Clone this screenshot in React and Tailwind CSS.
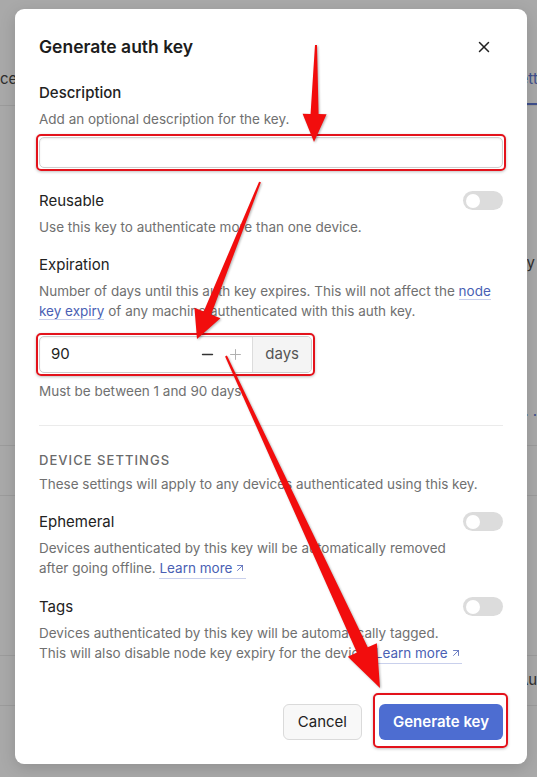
import { X, ArrowUpRight, Minus, Plus } from 'lucide-react'

const font = { fontFamily: 'Inter, "Noto Sans", sans-serif' }

function arrowPoints(tail, tip, tailW, neckW, headLen, headW) {
    const dx = tip[0] - tail[0]
    const dy = tip[1] - tail[1]
    const len = Math.hypot(dx, dy)
    const ux = dx / len
    const uy = dy / len
    const nx = -uy
    const ny = ux
    const bx = tip[0] - ux * headLen
    const by = tip[1] - uy * headLen
    const p = (x, y, w, s) => `${x + nx * w * s / 2},${y + ny * w * s / 2}`
    return [
        p(tail[0], tail[1], tailW, 1),
        p(bx, by, neckW, 1),
        p(bx, by, headW, 1),
        `${tip[0]},${tip[1]}`,
        p(bx, by, headW, -1),
        p(bx, by, neckW, -1),
        p(tail[0], tail[1], tailW, -1),
    ].join(' ')
}

function Toggle() {
    return (
        <div className="w-[40px] h-[19px] rounded-full bg-[#dcdcdc] flex items-center px-[3px] shrink-0">
            <div className="w-[14px] h-[14px] rounded-full bg-white" />
        </div>
    )
}

function LearnMore() {
    return (
        <a className="inline-flex items-center gap-[2px] text-[#4a5fb4] border-b border-[#c9d0ec]">
            Learn more <ArrowUpRight className="w-[12px] h-[12px]" strokeWidth={1.6} />
        </a>
    )
}

function Annotation() {
    return <div className="absolute -inset-[3px] rounded-[5px] border-2 border-[#e3121b] shadow-[0_1px_3px_rgba(0,0,0,0.25)] pointer-events-none" />
}

export default function App() {
    return (
        <div className="relative w-[537px] h-[777px] overflow-hidden bg-[#a9a9a9]" style={font}>
            {/* background page, dimmed */}
            <div className="flex flex-col text-[15px] text-[#2e2e2e]">
                <div className="h-[66px]" />
                <div className="flex h-[40px] border-b border-[#9c9c9c] whitespace-nowrap">
                    <div className="w-[510px] shrink-0 pt-[2px]">ces</div>
                    <div className="shrink-0 pt-[2px] text-[#3f4f8c] border-b-2 border-[#3f4f8c]">Settings</div>
                </div>
                <div className="h-[146px]" />
                <div className="flex justify-end pr-[2px] h-[22px]">Key expiry</div>
                <div className="h-[126px]" />
                <div className="flex justify-end h-[22px] text-[#3f4f8c]">Rule . .</div>
                <div className="h-[24px] border-b border-[#9c9c9c]" />
                <div className="h-[50px] border-b border-[#9c9c9c]" />
                <div className="h-[160px] border-b border-[#9c9c9c]" />
                <div className="flex justify-end -mr-[14px] h-[50px] items-center border-b border-[#9c9c9c] whitespace-nowrap">Auto</div>
            </div>

            {/* modal */}
            <div className="absolute left-[15px] top-[9px] w-[512px] bg-white rounded-[9px] shadow-[0_4px_16px_rgba(0,0,0,0.15)] px-[24px] pt-[25px] pb-[24px]">
                <div className="flex items-center justify-between h-[26px]">
                    <h2 className="text-[17.5px] font-semibold text-[#1c1c1c]">Generate auth key</h2>
                    <X className="w-[18px] h-[18px] text-[#222] mr-[10px]" strokeWidth={2} />
                </div>

                <div className="mt-[22px] text-[15px] leading-[22px] font-medium text-[#222]">Description</div>
                <div className="mt-[5px] text-[13.5px] leading-[20px] text-[#707070]">Add an optional description for the key.</div>
                <div className="relative mt-[8px]">
                    <input className="w-full h-[31px] rounded-[5px] border border-[#cfcfcf] shadow-[inset_0_1px_2px_rgba(0,0,0,0.08)] px-[10px] outline-none" />
                    <Annotation />
                </div>

                <div className="mt-[22px] flex items-start justify-between">
                    <div className="text-[15px] leading-[22px] text-[#222]">Reusable</div>
                    <div className="mt-[1px]"><Toggle /></div>
                </div>
                <div className="mt-[5px] text-[13.5px] leading-[20px] text-[#707070]">Use this key to authenticate more than one device.</div>

                <div className="mt-[17px] text-[15px] leading-[22px] text-[#222]">Expiration</div>
                <div className="mt-[5px] text-[13.5px] leading-[20px] text-[#707070]">
                    Number of days until this auth key expires. This will not affect the{' '}
                    <a className="text-[#4a5fb4] border-b border-[#c9d0ec]">node key expiry</a> of any machine authenticated with this auth key.
                </div>
                <div className="relative mt-[15px] w-[273px]">
                    <div className="flex h-[37px] rounded-[5px] border border-[#cdcdcd] overflow-hidden shadow-[inset_0_1px_2px_rgba(0,0,0,0.06)]">
                        <div className="flex-1 flex items-center pl-[11px] pr-[8px] text-[15px] text-[#222]">
                            <span className="flex-1">90</span>
                            <Minus className="w-[17px] h-[17px] text-[#333]" strokeWidth={2} />
                            <Plus className="w-[17px] h-[17px] text-[#b0b0b0] ml-[11px]" strokeWidth={1.4} />
                        </div>
                        <div className="flex items-center px-[12px] bg-[#f4f4f4] border-l border-[#dcdcdc] text-[15px] text-[#555]">days</div>
                    </div>
                    <Annotation />
                </div>
                <div className="mt-[8px] text-[13.5px] leading-[20px] text-[#707070]">Must be between 1 and 90 days.</div>

                <div className="mt-[24px] border-t border-[#ebebeb]" />

                <div className="mt-[25px] text-[13px] leading-[18px] font-medium tracking-[0.08em] text-[#6a6a6a]">DEVICE SETTINGS</div>
                <div className="mt-[5px] text-[13.5px] leading-[20px] text-[#707070]">These settings will apply to any devices authenticated using this key.</div>

                <div className="mt-[17px] flex items-start justify-between">
                    <div className="text-[15px] leading-[22px] text-[#222]">Ephemeral</div>
                    <div className="mt-[1px]"><Toggle /></div>
                </div>
                <div className="mt-[5px] max-w-[430px] text-[13.5px] leading-[20px] text-[#707070]">
                    Devices authenticated by this key will be automatically removed after going offline. <LearnMore />
                </div>

                <div className="mt-[17px] flex items-start justify-between">
                    <div className="text-[15px] leading-[22px] text-[#222]">Tags</div>
                    <div className="mt-[1px]"><Toggle /></div>
                </div>
                <div className="mt-[5px] max-w-[430px] text-[13.5px] leading-[20px] text-[#707070]">
                    Devices authenticated by this key will be automatically tagged. This will also disable node key expiry for the device. <LearnMore />
                </div>

                <div className="mt-[40px] flex justify-end gap-[17px]">
                    <button className="h-[36px] px-[14px] rounded-[6px] border border-[#dadada] bg-[#f8f8f8] text-[15px] text-[#222]">Cancel</button>
                    <div className="relative">
                        <button className="h-[36px] px-[14px] rounded-[6px] bg-[#4d6dd1] text-[15px] font-semibold text-white">Generate key</button>
                        <div className="absolute -left-[6px] -right-[5px] -top-[11px] -bottom-[8px] rounded-[5px] border-2 border-[#e3121b] shadow-[0_1px_3px_rgba(0,0,0,0.25)] pointer-events-none" />
                    </div>
                </div>
            </div>

            {/* red arrows */}
            <svg className="absolute inset-0 pointer-events-none" width="537" height="777" viewBox="0 0 537 777">
                <g fill="#f20d0d" style={{ filter: 'drop-shadow(1px 1px 1px rgba(0,0,0,0.3))' }}>
                    <polygon points={arrowPoints([316, 45], [314, 142], 2, 8, 28, 24)} />
                    <polygon points={arrowPoints([260, 182], [197, 339], 2, 8, 28, 28)} />
                    <polygon points={arrowPoints([226, 356], [380, 688], 2, 12, 42, 32)} />
                </g>
            </svg>
        </div>
    )
}
